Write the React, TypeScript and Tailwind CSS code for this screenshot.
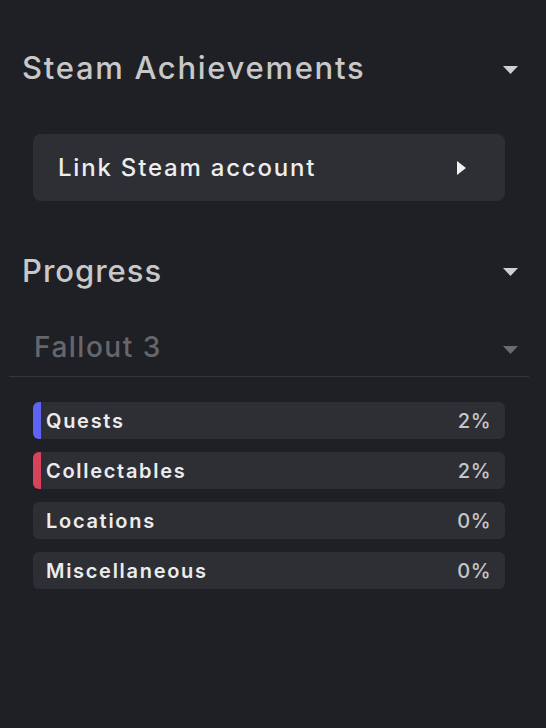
import React from 'react'

function CaretDown({ className }: { className?: string }) {
  return (
    <svg width="15" height="8" viewBox="0 0 15 8" className={className}>
      <path d="M0 0h15L7.5 8z" fill="currentColor" />
    </svg>
  )
}

function CaretRight() {
  return (
    <svg width="9" height="14" viewBox="0 0 9 14">
      <path d="M0 0l9 7-9 7z" fill="#f2f2f2" />
    </svg>
  )
}

const rows = [
  { label: 'Quests', pct: 2, color: 'bg-[#5d63f2]' },
  { label: 'Collectables', pct: 2, color: 'bg-[#d8425a]' },
  { label: 'Locations', pct: 0, color: 'bg-transparent' },
  { label: 'Miscellaneous', pct: 0, color: 'bg-transparent' },
]

export default function App() {
  return (
    <div className="min-h-[728px] bg-[#1f2025] font-['Inter','Noto_Sans',sans-serif] pt-[47px]">
      <div className="flex items-center justify-between h-10 pl-[22px] pr-[28px] text-[#c8c8c8]">
        <span className="text-[31px] leading-none font-medium tracking-[1.7px]">Steam Achievements</span>
        <CaretDown className="mt-[6px] text-[#d0d0d0]" />
      </div>

      <div className="ml-[33px] mt-[47px] w-[472px] h-[67px] rounded-lg bg-[#2e2f35] flex items-center justify-between pl-[25px] pr-[39px]">
        <span className="text-[24px] leading-none font-medium text-[#ededed] tracking-[1.8px]">Link Steam account</span>
        <CaretRight />
      </div>

      <div className="mt-[49px] flex items-center justify-between h-10 pl-[22px] pr-[28px] text-[#c8c8c8]">
        <span className="text-[31px] leading-none font-medium tracking-[1px]">Progress</span>
        <CaretDown className="mt-[4px] text-[#d0d0d0]" />
      </div>

      <div className="ml-[9px] mr-[17px] mt-[37px] pb-[9px] border-b border-[#35363c]">
        <div className="flex items-center justify-between h-[40px] pl-[25px] pr-[11px] text-[#66676b]">
          <span className="text-[28px] leading-none font-medium tracking-[1.5px]">Fallout 3</span>
          <CaretDown className="mt-[6px] text-[#6a6b6f]" />
        </div>
      </div>

      <div className="mt-[25px] ml-[33px] w-[472px] flex flex-col gap-[13px]">
        {rows.map((r) => (
          <div key={r.label} className="relative h-[37px] rounded-md bg-[#2e2f35] overflow-hidden flex items-center justify-between pl-[13px] pr-[14px]">
            <div className={`absolute left-0 top-0 bottom-0 ${r.color}`} style={{ width: `${r.pct * 0.9}%` }} />
            <span className="relative text-[20px] leading-none font-semibold text-[#ececec] tracking-[1.7px]">{r.label}</span>
            <span className="relative text-[20px] leading-none font-medium text-[#c6c6c6] tracking-[0.5px]">{r.pct}%</span>
          </div>
        ))}
      </div>
    </div>
  )
}
